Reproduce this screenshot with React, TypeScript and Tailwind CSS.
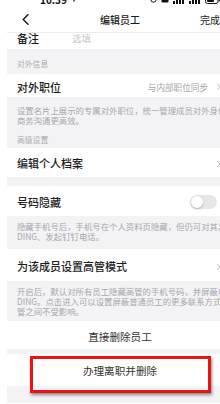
import React from "react";

const font = {
  fontFamily: '"Noto Sans CJK SC", "Noto Sans", "Liberation Sans", sans-serif',
};

function Chevron() {
  return (
    <svg width="5" height="8" viewBox="0 0 5 8" className="shrink-0">
      <path d="M1 1l3 3-3 3" fill="none" stroke="#c4c4c8" strokeWidth="1" />
    </svg>
  );
}

function StatusBar() {
  return (
    <div className="h-[7px] overflow-hidden">
      <div className="-mt-[7px] flex h-[13px] items-center justify-between pl-[33px] pr-[13px] text-[10px] font-semibold text-[#111]">
        <div className="flex items-center gap-[3px]">
          <span>10:39</span>
          <svg width="7" height="7" viewBox="0 0 7 7">
            <path d="M0.5 3.2L6.5 0.5 3.8 6.5 3.2 3.8z" fill="#111" />
          </svg>
        </div>
        <div className="flex items-center gap-[4px]">
          <svg width="7" height="7" viewBox="0 0 7 7">
            <circle cx="3.5" cy="3.5" r="2.7" fill="none" stroke="#111" strokeWidth="1" />
          </svg>
          <svg width="8" height="7" viewBox="0 0 8 7">
            <rect x="0.5" y="0.5" width="7" height="6" rx="1" fill="#111" />
          </svg>
          <svg width="12" height="9" viewBox="0 0 12 9">
            <rect x="0" y="6" width="2" height="3" fill="#111" />
            <rect x="3" y="4" width="2" height="5" fill="#111" />
            <rect x="6" y="2" width="2" height="7" fill="#111" />
            <rect x="9" y="0" width="2" height="9" fill="#111" />
          </svg>
          <svg width="12" height="9" viewBox="0 0 12 9">
            <rect x="0" y="6" width="2" height="3" fill="#111" />
            <rect x="3" y="4" width="2" height="5" fill="#111" />
            <rect x="6" y="2" width="2" height="7" fill="#111" />
            <rect x="9" y="0" width="2" height="9" fill="#111" />
          </svg>
          <svg width="15" height="8" viewBox="0 0 15 8">
            <rect x="0.5" y="0.5" width="12.5" height="7" rx="2" fill="none" stroke="#111" strokeWidth="1" />
            <rect x="2" y="2" width="7" height="4" rx="1" fill="#111" />
            <rect x="13.6" y="2.5" width="1.2" height="3" fill="#111" />
          </svg>
        </div>
      </div>
    </div>
  );
}

function SectionLabel({ children, className }: { children: React.ReactNode; className: string }) {
  return (
    <div className={`flex items-end bg-[#f3f3f6] px-[10px] text-[7.8px] leading-[10px] text-[#a9a9ae] ${className}`}>
      {children}
    </div>
  );
}

function Desc({ lines, className }: { lines: string[]; className: string }) {
  return (
    <div className={`overflow-hidden whitespace-nowrap bg-[#f3f3f6] px-[10px] text-[8.4px] leading-[10px] text-[#a6a6ab] ${className}`}>
      {lines.map((l) => (
        <div key={l}>{l}</div>
      ))}
    </div>
  );
}

export default function App() {
  return (
    <div className="relative h-[404px] w-[220px] overflow-hidden bg-white" style={font}>
      <div className="ml-[7px] w-[226px]">
        <StatusBar />

        <div className="grid h-[26px] grid-cols-[1fr_auto_1fr] items-center border-b border-[#ececef] bg-white">
          <div className="pl-[15px]">
            <svg width="7" height="11" viewBox="0 0 7 11">
              <path d="M6 0.8L1.2 5.5 6 10.2" fill="none" stroke="#1a1a1a" strokeWidth="1.5" strokeLinecap="round" strokeLinejoin="round" />
            </svg>
          </div>
          <div className="text-[10px] font-medium text-[#1a1a1a]">编辑员工</div>
          <div className="flex justify-end pr-[13px] text-[10px] text-[#1a1a1a]">完成</div>
        </div>

        <div className="flex h-[16px] items-start overflow-hidden bg-white px-[10px]">
          <span className="-mt-[2px] w-[55px] text-[11px] font-medium leading-[15px] text-[#1a1a1a]">备注</span>
          <span className="-mt-[2px] text-[9.5px] leading-[15px] text-[#c8c8cc]">选填</span>
        </div>

        <SectionLabel className="h-[25px] pb-[5px]">对外信息</SectionLabel>

        <div className="flex h-[23px] items-center justify-between bg-white pl-[10px] pr-[12px] pt-[3px]">
          <span className="text-[11px] font-medium text-[#1a1a1a]">对外职位</span>
          <div className="flex items-center gap-[8px]">
            <span className="text-[8.6px] text-[#a6a6ab]">与内部职位同步</span>
            <Chevron />
          </div>
        </div>

        <Desc
          className="h-[32px] pt-[8px]"
          lines={["设置名片上展示的专属对外职位，统一管理成员对外身份，让", "商务沟通更高效。"]}
        />
        <SectionLabel className="h-[19px] pb-[3px]">高级设置</SectionLabel>

        <div className="flex h-[29px] items-center justify-between bg-white pl-[10px] pr-[12px] pt-[2px]">
          <span className="text-[11px] font-medium text-[#1a1a1a]">编辑个人档案</span>
          <Chevron />
        </div>

        <div className="h-[9px] bg-[#f3f3f6]" />

        <div className="flex h-[30px] items-center justify-between bg-white pl-[10px] pr-[16px] pt-[2px]">
          <span className="text-[11px] font-medium text-[#1a1a1a]">号码隐藏</span>
          <div className="flex h-[14px] w-[27px] items-center rounded-full bg-[#e6e6ea] px-[1px]">
            <div className="h-[12px] w-[12px] rounded-full bg-white shadow-[0_1px_2px_rgba(0,0,0,0.25)]" />
          </div>
        </div>

        <Desc
          className="h-[33px] pt-[5px]"
          lines={["隐藏手机号后，手机号在个人资料页隐藏，但仍可对其发", "DING、发起钉钉电话。"]}
        />

        <div className="flex h-[32px] items-center justify-between bg-white pl-[10px] pr-[12px] pt-[3px]">
          <span className="text-[11px] font-medium text-[#1a1a1a]">为该成员设置高管模式</span>
          <Chevron />
        </div>

        <Desc
          className="h-[40px] pt-[5px]"
          lines={[
            "开启后，默认对所有员工隐藏高管的手机号码，并屏蔽电话和",
            "DING。点击进入可以设置屏蔽普通员工的更多联系方式。高",
            "管之间不受影响。",
          ]}
        />

        <div className="flex h-[28px] items-center justify-center bg-white pt-[3px] text-[10.6px] text-[#333]">
          直接删除员工
        </div>

        <div className="h-[5px] bg-[#f3f3f6]" />

        <div className="flex h-[32px] items-center justify-center bg-white pt-[2px] text-[10.6px] text-[#333]">
          办理离职并删除
        </div>

        <div className="h-[17px] bg-[#f3f3f6]" />
      </div>

      <div className="absolute left-[30px] top-[356px] h-[37px] w-[181px] border-[3px] border-[#ee1111] shadow-[1px_2px_3px_rgba(0,0,0,0.45)]" />
    </div>
  );
}
